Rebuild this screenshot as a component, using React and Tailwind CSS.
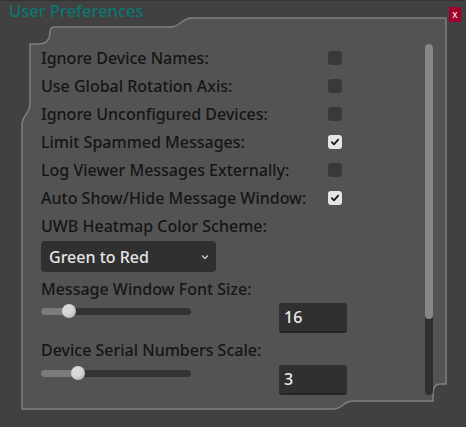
import React from "react";

const font = { fontFamily: '"Noto Sans", "Open Sans", sans-serif' };

function Check({ checked }) {
  return checked ? (
    <div className="w-[14px] h-[14px] rounded-[3px] bg-[#e6e6e6] flex items-center justify-center">
      <svg width="10" height="10" viewBox="0 0 10 10">
        <path d="M1.8 5.2 L4 7.4 L8.2 2.6" stroke="#1a1a1a" strokeWidth="1.8" fill="none" strokeLinecap="round" strokeLinejoin="round" />
      </svg>
    </div>
  ) : (
    <div className="w-[14px] h-[14px] rounded-[3px] bg-[#393939]" />
  );
}

function Row({ label, checked }) {
  return (
    <div className="flex items-center justify-between h-[28px] w-[301px]">
      <span>{label}</span>
      <Check checked={checked} />
    </div>
  );
}

function Slider({ pos }) {
  return (
    <div className="relative w-[150px] h-[14px] flex items-center">
      <div className="w-full h-[7px] rounded-full bg-[#333333]" />
      <div className="absolute left-0 h-[7px] rounded-full bg-[#7c7c7c]" style={{ width: pos }} />
      <div
        className="absolute w-[14px] h-[14px] rounded-full bg-[#d8d8d8] shadow-[inset_-2px_-2px_2px_rgba(0,0,0,0.12)]"
        style={{ left: pos - 7 }}
      />
    </div>
  );
}

function NumBox({ value }) {
  return (
    <div className="w-[68px] h-[30px] rounded-[3px] bg-[#303030] border-b-2 border-[#262626] text-[#ececec] pl-[5px] flex items-center">
      {value}
    </div>
  );
}

export default function App() {
  return (
    <div className="relative w-[466px] h-[427px] bg-[#414141] overflow-hidden border-t border-[#333333]" style={font}>
      <svg className="absolute left-0 top-0 pointer-events-none" width="466" height="427">
        <path
          d="M22 408 L22 124 C22 114 30 113 30 103 L30 43 L38 43 Q50 43 50 31 Q50 26 55 26 L170 26 C181 26 181 17 192 17 L446 17 L446 383 L441 383 Q433 383 433 392 L433 400 L353 400 C343 400 343 408 333 408 Z"
          fill="#535353"
          stroke="#808080"
          strokeWidth="1.5"
        />
      </svg>
      <div className="relative flex flex-col">
        <div className="flex items-center justify-between h-[22px] pl-[9px] pr-[5px]">
          <span className="text-[16.5px] font-medium leading-none text-[#0b7673] mt-[-2px]">User Preferences</span>
          <div className="w-[12px] h-[15px] bg-[#a3002b] text-white text-[10px] leading-none flex items-center justify-center mt-[4px]">
            x
          </div>
        </div>
        <div className="flex pl-[41px] pt-[21px] text-[16px] font-medium text-[#151515]">
          <div className="flex flex-col w-[306px]">
            <Row label="Ignore Device Names:" />
            <Row label="Use Global Rotation Axis:" />
            <Row label="Ignore Unconfigured Devices:" />
            <Row label="Limit Spammed Messages:" checked />
            <Row label="Log Viewer Messages Externally:" />
            <Row label="Auto Show/Hide Message Window:" checked />
            <div className="flex items-center h-[28px]">UWB Heatmap Color Scheme:</div>
            <div className="mt-[1px] w-[175px] h-[31px] rounded-[4px] bg-[#303030] flex items-center justify-between pl-[8px] pr-[5px] text-[#e4e4e4]">
              <span>Green to Red</span>
              <svg width="12" height="12" viewBox="0 0 12 12">
                <path d="M3 4.5 L6 7.5 L9 4.5" stroke="#bdbdbd" strokeWidth="1.5" fill="none" />
              </svg>
            </div>
            <div className="flex items-center h-[22px] mt-[6px]">Message Window Font Size:</div>
            <div className="flex items-start justify-between mt-[3px]">
              <div className="mt-[1px]">
                <Slider pos={28} />
              </div>
              <NumBox value="16" />
            </div>
            <div className="flex items-center h-[22px] mt-[6px]">Device Serial Numbers Scale:</div>
            <div className="flex items-start justify-between mt-[4px]">
              <div className="mt-[1px]">
                <Slider pos={37} />
              </div>
              <NumBox value="3" />
            </div>
          </div>
          <div className="ml-[78px] w-[8px] h-[351px] rounded-full bg-[#2e2e2e] flex flex-col">
            <div className="h-[275px] rounded-full bg-[#878787]" />
          </div>
        </div>
      </div>
    </div>
  );
}
